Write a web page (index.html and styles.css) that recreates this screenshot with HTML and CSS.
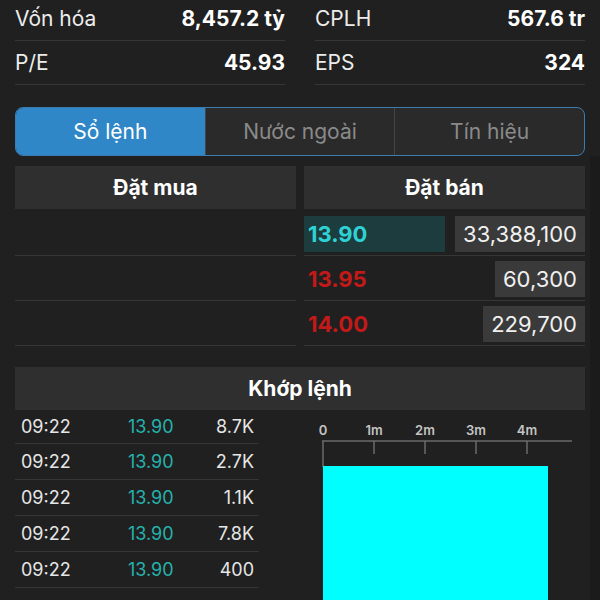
FILE: index.html
```html
<!DOCTYPE html>
<html lang="vi">
<head>
  <meta charset="UTF-8">
  <meta name="viewport" content="width=device-width, initial-scale=1">
  <title>Sổ lệnh</title>
  <link rel="stylesheet" href="styles.css">
</head>
<body>

<!-- Thong tin co ban -->
<div class="stats">
  <div class="stat-col">
    <div class="stat"><span>Vốn hóa</span><b>8,457.2 tỷ</b></div>
    <div class="stat"><span>P/E</span><b>45.93</b></div>
  </div>
  <div class="stat-col">
    <div class="stat"><span>CPLH</span><b>567.6 tr</b></div>
    <div class="stat"><span>EPS</span><b>324</b></div>
  </div>
</div>

<!-- Tabs -->
<div class="tabs">
  <div class="tab active">Sổ lệnh</div>
  <div class="tab">Nước ngoài</div>
  <div class="tab">Tín hiệu</div>
</div>

<div class="content">
  <!-- So lenh -->
  <div class="book">
    <div class="side">
      <div class="side-head">Đặt mua</div>
      <div class="book-row"></div>
      <div class="book-row"></div>
      <div class="book-row"></div>
    </div>
    <div class="side">
      <div class="side-head">Đặt bán</div>
      <div class="book-row">
        <div class="price best">13.90</div>
        <div class="vol">33,388,100</div>
      </div>
      <div class="book-row">
        <div class="price down">13.95</div>
        <div class="vol">60,300</div>
      </div>
      <div class="book-row">
        <div class="price down">14.00</div>
        <div class="vol">229,700</div>
      </div>
    </div>
  </div>

  <!-- Khop lenh -->
  <div class="match-head">Khớp lệnh</div>
  <div class="match">
    <div class="trades">
      <div class="trade"><span>09:22</span><span class="tp">13.90</span><span class="tv">8.7K</span></div>
      <div class="trade"><span>09:22</span><span class="tp">13.90</span><span class="tv">2.7K</span></div>
      <div class="trade"><span>09:22</span><span class="tp">13.90</span><span class="tv">1.1K</span></div>
      <div class="trade"><span>09:22</span><span class="tp">13.90</span><span class="tv">7.8K</span></div>
      <div class="trade"><span>09:22</span><span class="tp">13.90</span><span class="tv">400</span></div>
    </div>
    <svg class="chart" width="285" height="200" viewBox="0 0 285 200">
      <g class="axis-label">
        <text x="23" y="25">0</text>
        <text x="74" y="25">1m</text>
        <text x="125" y="25">2m</text>
        <text x="176" y="25">3m</text>
        <text x="227" y="25">4m</text>
      </g>
      <g stroke="#6a6a6a" stroke-width="1.5">
        <line x1="22" y1="31" x2="272" y2="31"/>
        <line x1="23" y1="31" x2="23" y2="57"/>
        <line x1="74" y1="31" x2="74" y2="44"/>
        <line x1="125" y1="31" x2="125" y2="44"/>
        <line x1="176" y1="31" x2="176" y2="44"/>
        <line x1="227" y1="31" x2="227" y2="44"/>
      </g>
      <rect x="23" y="56" width="225" height="150" fill="#00ffff"/>
    </svg>
  </div>
</div>

</body>
</html>
```

FILE: styles.css
```css
body {
  font-family: Inter, "Noto Sans", sans-serif;
  margin: 0;
  padding: 0;
  background: #202020;
  color: #ececec;
  width: 600px;
  height: 600px;
  overflow: hidden;
}
.stats {
  display: grid;
  grid-template-columns: 1fr 1fr;
  gap: 30px;
  padding: 0 15px;
  margin-top: -3px;
}
.stat {
  display: flex;
  justify-content: space-between;
  align-items: center;
  height: 43px;
  border-bottom: 1px solid #363636;
  font-size: 21px;
}
.stat b {
  color: #fff;
  font-weight: 700;
}
.tabs {
  display: flex;
  margin: 22px 15px 0;
  height: 49px;
  box-sizing: border-box;
  border: 1.5px solid #3b7bb0;
  border-radius: 8px;
  overflow: hidden;
  background: #2a2a2a;
}
.tab {
  flex: 1;
  display: flex;
  align-items: center;
  justify-content: center;
  font-size: 21px;
  color: #8a8a8a;
  border-left: 1px solid #444;
}
.tab:first-child {
  border-left: none;
}
.tab.active {
  background: #2f87c8;
  color: #fff;
}
.content {
  padding: 10px 5px 0 15px;
  border-right: 10px solid #1b1b1b;
  width: 570px;
}
.book {
  display: grid;
  grid-template-columns: 1fr 1fr;
  gap: 8px;
}
.side-head {
  height: 43px;
  background: #2f2f2f;
  display: flex;
  align-items: center;
  justify-content: center;
  font-size: 21px;
  font-weight: 700;
  color: #fff;
}
.book-row {
  height: 45px;
  box-sizing: border-box;
  padding-bottom: 3px;
  border-bottom: 1px solid #363636;
  display: flex;
  align-items: flex-end;
  justify-content: space-between;
}
.side-head + .book-row {
  height: 47px;
}
.price {
  width: 141px;
  height: 36px;
  box-sizing: border-box;
  padding-left: 4px;
  display: flex;
  align-items: center;
  font-size: 22px;
  font-weight: 700;
}
.price.best {
  background: #1d3c3e;
  color: #2fd2d4;
}
.price.down {
  color: #c21919;
}
.vol {
  height: 36px;
  padding: 0 8px;
  display: flex;
  align-items: center;
  background: #3a3a3a;
  font-size: 22px;
  color: #f0f0f0;
}
.match-head {
  margin-top: 21px;
  height: 43px;
  background: #2f2f2f;
  display: flex;
  align-items: center;
  justify-content: center;
  font-size: 21px;
  font-weight: 700;
  color: #fff;
}
.match {
  display: flex;
}
.trades {
  width: 244px;
  flex-shrink: 0;
}
.trade {
  display: grid;
  grid-template-columns: 107px 1fr auto;
  align-items: center;
  height: 36px;
  box-sizing: border-box;
  padding: 0 5px 0 6px;
  border-bottom: 1px solid #363636;
  font-size: 18px;
  color: #e6e6e6;
}
.trade:first-child {
  height: 34px;
}
.trade .tp {
  color: #24b2ad;
}
.trade .tv {
  text-align: right;
}
.chart {
  display: block;
  flex-shrink: 0;
  margin-left: 41px;
}
.axis-label text {
  fill: #c4c4c4;
  font-size: 13px;
  font-weight: 600;
  text-anchor: middle;
  font-family: Inter, sans-serif;
}
```
